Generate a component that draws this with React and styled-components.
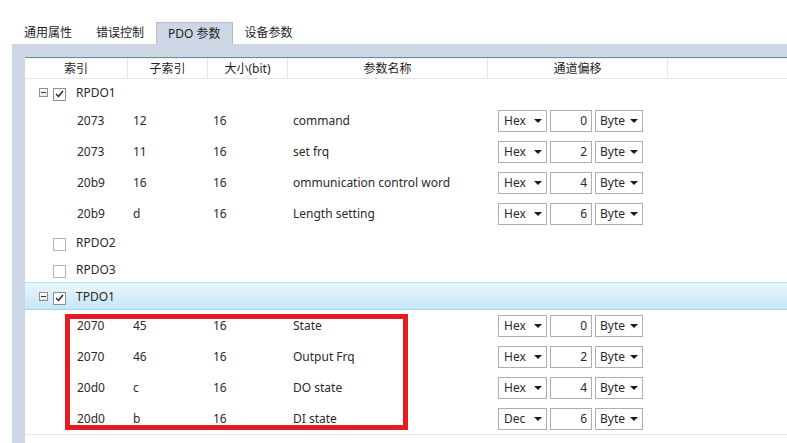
import React from "react";
import styled, { createGlobalStyle } from "styled-components";

const Global = createGlobalStyle`
  html, body { margin: 0; padding: 0; background: #ffffff; }
  body { font-family: "Noto Sans", "Noto Sans CJK SC", sans-serif; font-size: 12px; color: #2a2a2a; }
`;

const Screen = styled.div`
  width: 787px;
  height: 443px;
  overflow: hidden;
  display: flex;
  flex-direction: column;
  background: #ffffff;
`;

const TabBar = styled.div`
  display: flex;
  align-items: flex-end;
  padding: 22px 0 0 12px;
  height: 22px;
`;

const Tab = styled.div`
  height: ${(p) => (p.$active ? "21px" : "22px")};
  line-height: 21px;
  padding: 0 ${(p) => (p.$active ? "11px" : "12px")};
  font-size: 12px;
  color: #1e1e1e;
  white-space: nowrap;
  background: ${(p) => (p.$active ? "#cdd6e5" : "transparent")};
  border: ${(p) => (p.$active ? "1px solid #b3bbc7" : "none")};
  border-bottom: none;
`;

const Panel = styled.div`
  flex: 1;
  margin-left: 12px;
  background: #cdd6e5;
  padding: 13px 0 0 13px;
  display: flex;
  min-height: 0;
`;

const List = styled.div`
  flex: 1;
  background: #ffffff;
  border-top: 1px solid #6c8e98;
  box-shadow: inset 0 1px 0 #e4f5f8;
  overflow: hidden;
`;

const cols = "103px 80px 80px 200px 180px 1fr";

const Header = styled.div`
  display: grid;
  grid-template-columns: ${cols};
  height: 20px;
  border-bottom: 1px solid #e6e6e6;
`;

const HeadCell = styled.div`
  display: flex;
  align-items: center;
  justify-content: center;
  font-size: 12px;
  color: #1e1e1e;
  border-right: 1px solid #e6e6e6;
  &:last-child { border-right: none; }
`;

const TreeRow = styled.div`
  position: relative;
  height: ${(p) => p.$h}px;
  display: flex;
  align-items: center;
  padding-left: 14px;
  box-sizing: border-box;
  ${(p) =>
    p.$selected &&
    `
    background: linear-gradient(#eaf6fd, #c6e6f7);
    border-top: 1px solid #b8e0f4;
    border-bottom: 1px solid #9fd5f1;
  `}
`;

const Expander = styled.div`
  width: 9px;
  height: 9px;
  box-sizing: border-box;
  border: 1px solid #8e8e8e;
  background: linear-gradient(#ffffff, #e6e6e6);
  display: flex;
  align-items: center;
  justify-content: center;
  visibility: ${(p) => (p.$hidden ? "hidden" : "visible")};
  margin-right: 5px;
  &::after {
    content: "";
    width: 5px;
    height: 1px;
    background: #333;
  }
`;

const CheckBox = styled.div`
  width: 13px;
  height: 13px;
  box-sizing: border-box;
  border: 1px solid ${(p) => (p.$checked ? "#8f8f8f" : "#b5b5b5")};
  background: #ffffff;
  display: flex;
  align-items: center;
  justify-content: center;
  margin-right: 10px;
  margin-top: 4px;
`;

const Label = styled.span`
  font-size: 12px;
  color: #2a2a2a;
`;

const Group = styled.div`
  position: relative;
  ${(p) => p.$divider && `border-bottom: 1px solid #e3e6ea;`}
`;

const DataRow = styled.div`
  display: grid;
  grid-template-columns: ${cols};
  height: 31px;
  align-items: center;
`;

const Cell = styled.div`
  padding-left: ${(p) => p.$pad}px;
  font-size: 12px;
  color: #2a2a2a;
  white-space: nowrap;
`;

const Controls = styled.div`
  display: flex;
  gap: 3px;
  padding-left: 10px;
`;

const Select = styled.div`
  width: ${(p) => p.$w}px;
  height: 22px;
  box-sizing: border-box;
  border: 1px solid #adadad;
  background: #ffffff;
  display: flex;
  align-items: center;
  justify-content: space-between;
  padding: 0 4px 0 ${(p) => p.$padL}px;
  font-size: 12px;
  color: #2a2a2a;
`;

const Arrow = styled.span`
  width: 0;
  height: 0;
  border-left: 4px solid transparent;
  border-right: 4px solid transparent;
  border-top: 4px solid #1a1a1a;
`;

const NumBox = styled.div`
  width: 42px;
  height: 22px;
  box-sizing: border-box;
  border: 1px solid #adadad;
  display: flex;
  align-items: center;
  justify-content: flex-end;
  padding-right: 4px;
  font-size: 12px;
  color: #2a2a2a;
`;

const Highlight = styled.div`
  position: absolute;
  left: 40px;
  top: 4px;
  width: 343px;
  height: 116px;
  box-sizing: border-box;
  border: 5px solid #e31b23;
  pointer-events: none;
`;

const Check = () => (
  <svg width="9" height="8" viewBox="0 0 9 8">
    <polyline points="1,4 3.5,6.5 8,1" fill="none" stroke="#222" strokeWidth="1.4" />
  </svg>
);

const Tree = ({ label, checked, expanded, h, selected }) => (
  <TreeRow $h={h} $selected={selected}>
    <Expander $hidden={!expanded} />
    <CheckBox $checked={checked}>{checked && <Check />}</CheckBox>
    <Label>{label}</Label>
  </TreeRow>
);

const Row = ({ d }) => (
  <DataRow>
    <Cell $pad={52}>{d[0]}</Cell>
    <Cell $pad={5}>{d[1]}</Cell>
    <Cell $pad={5}>{d[2]}</Cell>
    <Cell $pad={5}>{d[3]}</Cell>
    <Controls>
      <Select $w={49} $padL={5}>
        {d[4]}
        <Arrow />
      </Select>
      <NumBox>{d[5]}</NumBox>
      <Select $w={48} $padL={4}>
        Byte
        <Arrow />
      </Select>
    </Controls>
    <div />
  </DataRow>
);

const rpdo1 = [
  ["2073", "12", "16", "command", "Hex", "0"],
  ["2073", "11", "16", "set frq", "Hex", "2"],
  ["20b9", "16", "16", "ommunication control word", "Hex", "4"],
  ["20b9", "d", "16", "Length setting", "Hex", "6"],
];

const tpdo1 = [
  ["2070", "45", "16", "State", "Hex", "0"],
  ["2070", "46", "16", "Output Frq", "Hex", "2"],
  ["20d0", "c", "16", "DO state", "Hex", "4"],
  ["20d0", "b", "16", "DI state", "Dec", "6"],
];

export default function App() {
  return (
    <>
      <Global />
      <Screen>
        <TabBar>
          <Tab>通用属性</Tab>
          <Tab>错误控制</Tab>
          <Tab $active>PDO 参数</Tab>
          <Tab>设备参数</Tab>
        </TabBar>
        <Panel>
          <List>
            <Header>
              <HeadCell>索引</HeadCell>
              <HeadCell>子索引</HeadCell>
              <HeadCell>大小(bit)</HeadCell>
              <HeadCell>参数名称</HeadCell>
              <HeadCell>通道偏移</HeadCell>
              <HeadCell />
            </Header>
            <Tree label="RPDO1" checked expanded h={26} />
            <Group>
              {rpdo1.map((d, i) => (
                <Row key={i} d={d} />
              ))}
            </Group>
            <Tree label="RPDO2" h={27} />
            <Tree label="RPDO3" h={26} />
            <Tree label="TPDO1" checked expanded selected h={28} />
            <Group $divider>
              {tpdo1.map((d, i) => (
                <Row key={i} d={d} />
              ))}
              <Highlight />
            </Group>
            <Tree label="TPDO2" h={27} />
          </List>
        </Panel>
      </Screen>
    </>
  );
}
